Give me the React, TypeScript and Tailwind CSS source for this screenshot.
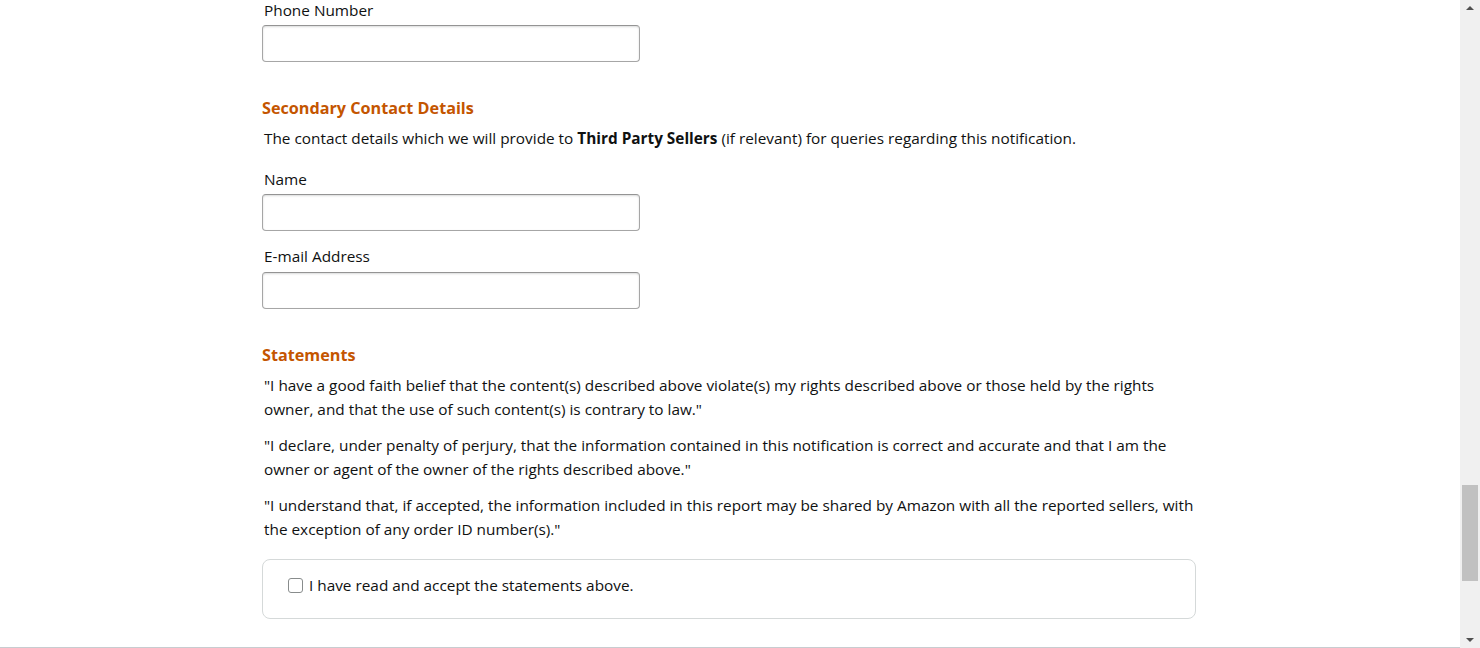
import { useState } from "react"

function Label({ text }: { text: string }) {
    return <label className="block pl-[2px] text-[15.35px] leading-[20px]">{text}</label>
}

function TextInput({ gap = "mt-[5px]" }: { gap?: string }) {
    return (
        <input
            type="text"
            className={`${gap} block w-[378px] h-[37px] rounded-[4px] border border-[#a6a6a6] border-t-[#949494] bg-white px-2 shadow-[inset_0_1px_2px_rgba(15,17,17,0.15)] outline-none`}
        />
    )
}

function Heading({ text }: { text: string }) {
    return <h3 className="mt-[34px] text-[16.2px] leading-[24px] font-bold text-[#c45500]">{text}</h3>
}

const statements = [
    "\"I have a good faith belief that the content(s) described above violate(s) my rights described above or those held by the rights owner, and that the use of such content(s) is contrary to law.\"",
    "\"I declare, under penalty of perjury, that the information contained in this notification is correct and accurate and that I am the owner or agent of the owner of the rights described above.\"",
    "\"I understand that, if accepted, the information included in this report may be shared by Amazon with all the reported sellers, with the exception of any order ID number(s).\"",
]

function Scrollbar() {
    return (
        <div className="flex h-[648px] w-[20px] shrink-0 flex-col items-center bg-[#f0f0f0]">
            <div className="mt-[6px] h-0 w-0 border-x-[4.5px] border-b-[4px] border-x-transparent border-b-[#505050]" />
            <div className="flex-1" />
            <div className="mb-[57px] h-[96px] w-[16px] bg-[#c1c1c1]" />
            <div className="mb-[6px] h-0 w-0 border-x-[4.5px] border-t-[4px] border-x-transparent border-t-[#505050]" />
        </div>
    )
}

export default function App() {
    const [accepted, setAccepted] = useState(false)
    return (
        <div className="flex h-[648px] w-full overflow-hidden bg-white font-['Open_Sans',sans-serif] text-[#0f1111]">
            <div className="flex-1 border-b border-[#c8ccd0]">
                <div className="ml-[262px] w-[934px]">
                    <Label text="Phone Number" />
                    <TextInput />

                    <Heading text="Secondary Contact Details" />
                    <p className="mt-[6px] pl-[2px] text-[15.35px] leading-[24px]">
                        The contact details which we will provide to <b>Third Party Sellers</b> (if relevant) for queries regarding this notification.
                    </p>

                    <div className="mt-[19px]">
                        <Label text="Name" />
                        <TextInput />
                    </div>
                    <div className="mt-[15px]">
                        <Label text="E-mail Address" />
                        <TextInput gap="mt-[6px]" />
                    </div>

                    <Heading text="Statements" />
                    <div className="mt-[6px] flex flex-col gap-[12px] pl-[2px] text-[15.35px] leading-[24px]">
                        {statements.map((s, i) => (
                            <p key={i}>{s}</p>
                        ))}
                    </div>

                    <div className="mt-[18px] h-[60px] rounded-[8px] border border-[#d5d9d9] pl-[25px] pt-[15px]">
                        <label className="flex items-center gap-[6px] text-[15.35px] leading-[20px]">
                            <input
                                type="checkbox"
                                checked={accepted}
                                onChange={() => setAccepted(!accepted)}
                                className="h-[15px] w-[15px] appearance-none rounded-[3px] border border-[#888c8c] bg-white checked:bg-[#2162a1]"
                            />
                            I have read and accept the statements above.
                        </label>
                    </div>
                </div>
            </div>
            <Scrollbar />
        </div>
    )
}
